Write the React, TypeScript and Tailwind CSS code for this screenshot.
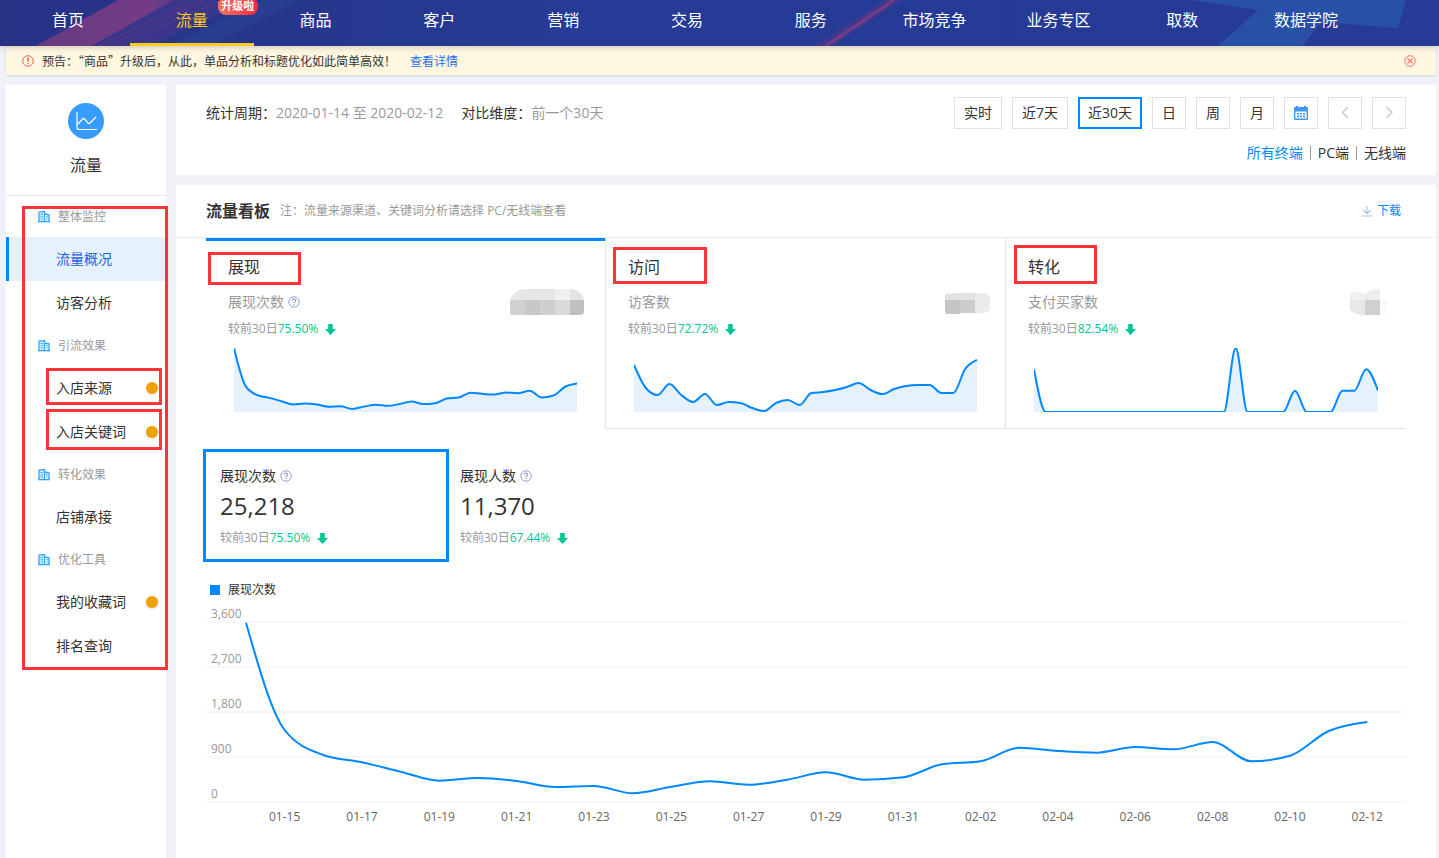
import type { ReactNode } from 'react'

const navItems = ['首页', '流量', '商品', '客户', '营销', '交易', '服务', '市场竞争', '业务专区', '取数', '数据学院']

const menu = [
  { group: '整体监控', items: [{ name: '流量概况', active: true }, { name: '访客分析' }] },
  { group: '引流效果', items: [{ name: '入店来源', dot: true }, { name: '入店关键词', dot: true }] },
  { group: '转化效果', items: [{ name: '店铺承接' }] },
  { group: '优化工具', items: [{ name: '我的收藏词', dot: true }, { name: '排名查询' }] },
] as { group: string; items: { name: string; active?: boolean; dot?: boolean }[] }[]

const exposure = [
  3586, 1440, 940, 794, 606, 426, 480, 420, 300, 320, 174, 306, 414, 346, 446, 594, 446, 494, 754, 814, 1086, 1020,
  986, 1100, 1054, 1200, 814, 926, 1420, 1600,
]
const visitors = [
  47, 24, 17, 28, 17, 10, 18, 7, 10, 9, 4, 1, 9, 12, 7, 19, 20, 22, 25, 29, 22, 18, 23, 26, 27, 27, 19, 19, 43, 52,
]
const buyers = [2, 0, 0, 0, 0, 0, 0, 0, 0, 0, 0, 0, 0, 0, 0, 0, 0, 3, 0, 0, 0, 0, 1, 0, 0, 0, 1, 1, 2, 1]

const tabs = [
  { title: '展现', label: '展现次数', help: true, change: '75.50%', data: exposure, max: 3600, active: true },
  { title: '访问', label: '访客数', help: false, change: '72.72%', data: visitors, max: 64, active: false },
  { title: '转化', label: '支付买家数', help: false, change: '82.54%', data: buyers, max: 3, active: false },
]

// highlight frame and tab borders, one entry per tab
const marks = ['left-[2px] top-[14px] w-[93px] h-[33px]', 'left-[7px] top-[9px] w-[94px] h-[37px]', 'left-[8px] top-[7px] w-[83px] h-[39px]']
const tabBorders = ['border-r border-b border-b-white', 'border-r border-b', 'border-b']

const metrics = [
  { label: '展现次数', value: '25,218', change: '75.50%', active: true },
  { label: '展现人数', value: '11,370', change: '67.44%', active: false },
]

const yLabels = ['3,600', '2,700', '1,800', '900', '0']
const xLabels = [
  '01-15', '01-17', '01-19', '01-21', '01-23', '01-25', '01-27', '01-29', '01-31', '02-02', '02-04', '02-06', '02-08',
  '02-10', '02-12',
]

// monotone cubic through one point per x unit
function spline(values: number[], max: number, height: number) {
  const ys = values.map((v) => height - (v / max) * height)
  const last = ys.length - 1
  const steps = ys.slice(1).map((y, i) => y - ys[i])
  const slopes = ys.map((_, i) => {
    if (i === 0 || i === last) return 0
    const a = steps[i - 1]
    const b = steps[i]
    return (Math.sign(a) + Math.sign(b)) * Math.min(Math.abs(a), Math.abs(b), Math.abs(a + b) / 4)
  })
  slopes[0] = (3 * steps[0] - slopes[1]) / 2
  slopes[last] = (3 * steps[last - 1] - slopes[last - 1]) / 2

  let d = `M0 ${ys[0]}`
  for (let i = 1; i <= last; i++) {
    d += `C${i - 2 / 3} ${ys[i - 1] + slopes[i - 1] / 3} ${i - 1 / 3} ${ys[i] - slopes[i] / 3} ${i} ${ys[i]}`
  }
  return d
}

function MiniChart({ data, max }: { data: number[]; max: number }) {
  const line = spline(data, max, 64)
  return (
    <svg className="block w-full h-16" viewBox="0 0 29 64" preserveAspectRatio="none">
      <path d={`${line}L29 64L0 64Z`} fill="#e5f2fe" />
      <path d={line} fill="none" stroke="#0088ff" strokeWidth="2" vectorEffect="non-scaling-stroke" />
    </svg>
  )
}

function BuildingIcon() {
  return (
    <svg className="w-3 h-3" viewBox="0 0 12 12" fill="none" stroke="#35a5fb">
      <path d="M1 10.5V1L6.5.6v9.9" fill="#d9efff" strokeWidth="1.3" />
      <path d="M6.5 3L11 3.8v6.7" fill="#d9efff" strokeWidth="1.3" />
      <path d="M0 10.6h12" strokeWidth="1.4" />
      <path d="M2.6 3.5h2.3M2.6 5.7h2.3M2.6 7.9h2.3M8 5.7h1.6M8 7.9h1.6" />
    </svg>
  )
}

function HelpIcon() {
  return (
    <svg className="w-3 h-3" viewBox="0 0 12 12" fill="none" stroke="#8ea3d6">
      <circle cx="6" cy="6" r="5.2" />
      <path d="M4.3 4.8C4.3 2.7 7.7 2.7 7.7 4.7C7.7 5.8 6 5.8 6 7.2" strokeWidth="1.2" />
      <path d="M6 8.1v1.2" strokeWidth="1.2" />
    </svg>
  )
}

function DownArrow() {
  return (
    <svg className="w-[11px] h-[11px]" viewBox="0 0 11 11" fill="#00c596">
      <path d="M3.2 0h4.6v5H11L5.5 11L0 5h3.2z" />
    </svg>
  )
}

function CalendarIcon() {
  return (
    <svg className="w-[14px] h-[14px]" viewBox="0 0 14 14">
      <path d="M2 1V0h2v1h6V0h2v1h1q1 0 1 1v3H0V2q0-1 1-1z" fill="#3d97f7" />
      <rect x=".7" y="4.7" width="12.6" height="8.6" rx=".8" fill="#fff" stroke="#3d97f7" strokeWidth="1.4" />
      <path d="M3 7.8h2M6 7.8h2M9 7.8h2M3 10.4h2M6 10.4h2M9 10.4h2" stroke="#3d97f7" strokeWidth="1.6" />
    </svg>
  )
}

function Mosaic({ index }: { index: number }) {
  return (
    <svg className="w-20 h-[26px]" viewBox="0 0 80 26">
      {index === 0 && (
        <>
          <clipPath id="mosaic-a">
            <path d="M0 26V11Q4 1 14 0H60Q72 1 74 11V22Q74 26 70 26Z" />
          </clipPath>
          <g clipPath="url(#mosaic-a)">
            <path d="M0 0h45v11H0z" fill="#e6e6e6" />
            <path d="M45 0h15v11H45z" fill="#efefef" />
            <path d="M60 0h14v11H60z" fill="#e4e4e4" />
            <path d="M0 11h15v15H0z" fill="#d1d1d1" />
            <path d="M15 11h15v15H15z" fill="#c8c8c8" />
            <path d="M30 11h15v15H30z" fill="#cecece" />
            <path d="M45 11h15v15H45z" fill="#dadada" />
            <path d="M60 11h14v15H60z" fill="#c0c0c0" />
          </g>
        </>
      )}
      {index === 1 && (
        <>
          <path d="M35 5L48 4H65V11H35z" fill="#e2e2e2" />
          <path d="M65 4h9q6 1 6 6v9q0 4-6 5h-9z" fill="#ebebeb" />
          <path d="M35 11h15v14H37q-2 0-2-2z" fill="#c5c5c5" />
          <path d="M50 11h15v13H50z" fill="#cccccc" />
        </>
      )}
      {index === 2 && (
        <>
          <path d="M39 11V5Q45-1 54 5V11z" fill="#f1f1f1" />
          <path d="M54 11V5Q59 0 69 0V11z" fill="#ededed" />
          <path d="M39 11h15v15q-11 0-15-5z" fill="#e8e8e8" />
          <path d="M54 11h15v15H54z" fill="#d0d0d0" />
          <path d="M69 11h7v13l-7 2z" fill="#f9f9f9" />
        </>
      )}
    </svg>
  )
}

function Compare({ change }: { change: string }) {
  return (
    <span className="flex items-center text-xs leading-5 text-[#999]">
      较前30日<span className="text-[#00c596] mr-[7px]">{change}</span>
      <DownArrow />
    </span>
  )
}

function RangeButton({ children, active, label }: { children: ReactNode; active?: boolean; label?: string }) {
  return (
    <button
      aria-label={label}
      className={`h-8 min-w-[34px] flex items-center justify-center bg-white ${
        active ? 'border-2 border-[#0088ff] px-2' : 'border border-[#dfe0e3] px-[9px]'
      }`}
    >
      {children}
    </button>
  )
}

function Header() {
  return (
    <header className="relative bg-[#263a94] shadow-md z-10">
      <svg className="absolute inset-0 w-full h-full" viewBox="0 0 1439 46" preserveAspectRatio="none">
        <defs>
          <linearGradient id="head" x1="0" x2="1" y1="0" y2="0">
            <stop offset="0" stopColor="#273285" />
            <stop offset=".4" stopColor="#253b95" />
            <stop offset="1" stopColor="#263a96" />
          </linearGradient>
          <linearGradient id="beam" x1="0" x2="1" y1="0" y2="0">
            <stop offset="0" stopColor="#653b83" />
            <stop offset=".8" stopColor="#743b84" />
            <stop offset="1" stopColor="#5d3a86" />
          </linearGradient>
        </defs>
        <path d="M0 0H1439V46H0z" fill="url(#head)" />
        <path d="M36 46L118 0H174L92 46z" fill="url(#beam)" />
        <path d="M92 46L174 0H250L150 46z" fill="#42378c" opacity=".7" />
        <path d="M170 46L262 0H300L210 46z" fill="#2b4598" opacity=".6" />
        <path d="M108 46L205 0M130 40L222 0M98 46L190 3" stroke="#7d3a80" strokeWidth=".8" opacity=".7" />
        <path d="M812 46L886 0H902L832 46z" fill="#55388c" opacity=".5" />
        <path d="M826 46L894 0" stroke="#793b83" strokeWidth="3" />
        <path d="M1190 0H1406L1398 28L1322 22L1302 46H1218L1258 10z" fill="#2950a7" />
      </svg>
      <nav className="relative flex pl-1.5 pr-[71px]">
        {navItems.map((item) => (
          <a
            key={item}
            href="#"
            className={`relative flex-1 h-[46px] border-b-3 text-center text-base leading-10 ${
              item === '流量' ? 'border-[#f9cb20] text-[#f9cb20]' : 'border-transparent text-white'
            }`}
          >
            {item}
            {item === '流量' && (
              <span className="absolute left-[88px] top-0 w-10 h-[15px] rounded-t-sm rounded-b-lg bg-gradient-to-r from-[#ff7060] to-[#f5223f] text-[11px] leading-3 font-bold text-white">
                升级啦
              </span>
            )}
          </a>
        ))}
      </nav>
    </header>
  )
}

function Notice() {
  return (
    <div className="ml-1.5 mr-[3px] h-[29px] pl-4 pr-5 flex items-center bg-[#fff7e0] shadow text-xs text-[#333] font-['Noto_Sans_CJK_SC',sans-serif]">
      <svg className="w-3 h-3 mr-2" viewBox="0 0 12 12" fill="none" stroke="#f4685c">
        <circle cx="6" cy="6" r="5.3" />
        <path d="M6 2.6v4.2M6 7.9v1.4" strokeWidth="1.6" />
      </svg>
      <p>预告：“商品”升级后，从此，单品分析和标题优化如此简单高效！</p>
      <a href="#" className="ml-3.5 text-[#2a6df0]">
        查看详情
      </a>
      <button aria-label="关闭" className="ml-auto">
        <svg className="w-3 h-3" viewBox="0 0 12 12" fill="none" stroke="#f5796c">
          <circle cx="6" cy="6" r="5.3" />
          <path d="M3.5 3.5L8.5 8.5M8.5 3.5L3.5 8.5" strokeWidth="1.2" />
        </svg>
      </button>
    </div>
  )
}

function Sidebar() {
  return (
    <aside className="w-40 shrink-0 bg-white">
      <div className="h-[111px] pt-[18px] flex flex-col items-center border-b border-[#ebebed]">
        <svg className="w-9 h-9" viewBox="0 0 36 36" fill="none" stroke="#fff">
          <circle cx="18" cy="18" r="18" fill="#389bff" stroke="none" />
          <path d="M9 9v15.5q0 2 2 2h18" strokeWidth="1.2" />
          <path d="M9.5 21.5l5-5.5q1-1 2 0l3.5 4q1 1 2 0l6-6" strokeWidth="1.2" />
        </svg>
        <span className="mt-3.5 text-base leading-6 text-[#333]">流量</span>
      </div>
      <nav className="relative">
        {menu.map(({ group, items }) => (
          <div key={group}>
            <h3 className="h-[41px] pl-8 flex items-center gap-2 text-xs text-[#999]">
              <BuildingIcon />
              {group}
            </h3>
            {items.map((item) => (
              <a
                key={item.name}
                href="#"
                className={`h-11 pl-[47px] pr-2 flex items-center justify-between border-l-3 text-sm ${
                  item.active ? 'border-[#0088ff] bg-[#e5f2fe] text-[#2162e8]' : 'border-transparent text-[#333]'
                }`}
              >
                {item.name}
                {item.dot && <span className="w-3 h-3 rounded-full bg-[#f2a007] shadow" />}
              </a>
            ))}
          </div>
        ))}
        <div className="absolute left-4 top-2.5 w-[146px] h-[464px] border-3 border-[#fa3538] pointer-events-none" />
        <div className="absolute left-10 top-[172px] w-[116px] h-[37px] border-3 border-[#fa3538] pointer-events-none" />
        <div className="absolute left-10 top-[213px] w-[116px] h-[41px] border-3 border-[#fa3538] pointer-events-none" />
      </nav>
    </aside>
  )
}

function FilterBar() {
  return (
    <section className="bg-white px-[30px] py-3 flex justify-between text-sm text-[#333]">
      <div className="flex h-8 items-center gap-[18px]">
        <p>
          统计周期：<span className="text-[#999]">2020-01-14 至 2020-02-12</span>
        </p>
        <p>
          对比维度：<span className="text-[#999]">前一个30天</span>
        </p>
      </div>
      <div className="flex flex-col items-end gap-3.5">
        <div className="flex gap-2.5">
          <RangeButton>实时</RangeButton>
          <RangeButton>近7天</RangeButton>
          <RangeButton active>近30天</RangeButton>
          <RangeButton>日</RangeButton>
          <RangeButton>周</RangeButton>
          <RangeButton>月</RangeButton>
          <RangeButton label="选择日期">
            <CalendarIcon />
          </RangeButton>
          <RangeButton label="上一页">
            <svg className="w-3 h-3" viewBox="0 0 12 12" fill="none" stroke="#c8c8c8" strokeWidth="1.4">
              <path d="M9 0L3.5 5.5L9 11" />
            </svg>
          </RangeButton>
          <RangeButton label="下一页">
            <svg className="w-3 h-3" viewBox="0 0 12 12" fill="none" stroke="#c8c8c8" strokeWidth="1.4">
              <path d="M3.5 0L9 5.5L3.5 11" />
            </svg>
          </RangeButton>
        </div>
        <div className="flex items-center gap-[7px] leading-5">
          <button className="text-[#0088ff]">所有终端</button>
          <span className="w-px h-3.5 bg-[#999]" />
          <button>PC端</button>
          <span className="w-px h-3.5 bg-[#999]" />
          <button>无线端</button>
        </div>
      </div>
    </section>
  )
}

function TrendChart() {
  return (
    <div>
      <div className="mt-[21px] pl-1 flex items-center gap-2 text-xs leading-5 text-[#333]">
        <span className="w-2.5 h-2.5 bg-[#0088ff]" />
        展现次数
      </div>
      <div className="relative mt-[3px]">
        {yLabels.map((label, i) => (
          <div
            key={label}
            className={`pl-[5px] flex items-end border-b-2 border-[#f6f7fb] text-xs leading-[14px] text-[#999] ${
              i === 0 ? 'h-5' : 'h-[45px]'
            }`}
          >
            {label}
          </div>
        ))}
        <div className="absolute left-10 right-0 bottom-0 h-[181px]">
          <svg className="w-full h-[180px] overflow-visible" viewBox="0 0 30 180" preserveAspectRatio="none">
            <path
              d={spline(exposure, 3600, 180)}
              fill="none"
              stroke="#0088ff"
              strokeWidth="2"
              vectorEffect="non-scaling-stroke"
            />
          </svg>
        </div>
      </div>
      <div className="mt-[5px] pl-10 flex text-xs leading-[18px] text-[#666]">
        {xLabels.map((label) => (
          <span key={label} className="flex-1 text-center">
            {label}
          </span>
        ))}
      </div>
    </div>
  )
}

function Board() {
  return (
    <section className="flex-1 bg-white pb-8">
      <div className="h-[53px] pl-[30px] pr-[35px] flex items-center justify-between border-b border-[#ebebed]">
        <div className="flex items-center gap-2.5">
          <h2 className="text-base leading-6 font-bold text-[#333]">流量看板</h2>
          <p className="text-xs text-[#999]">注：流量来源渠道、关键词分析请选择 PC/无线端查看</p>
        </div>
        <a href="#" className="flex items-center gap-1 text-xs text-[#0088ff]">
          <svg className="w-3 h-3" viewBox="0 0 12 12" fill="none" stroke="#a9c4dd" strokeWidth="1.2">
            <path d="M6 1v7.5M2 5l4 3.7L10 5M.5 11h11" />
          </svg>
          下载
        </a>
      </div>
      <div className="px-[30px]">
        <div className="grid grid-cols-3" role="tablist">
          {tabs.map((tab, i) => (
            <button
              key={tab.title}
              role="tab"
              aria-selected={tab.active}
              className={`relative h-[191px] block text-left border-[#e2e3e6] ${tabBorders[i]}`}
            >
              {tab.active && <span className="absolute inset-x-0 top-0 h-[3px] bg-[#0088ff]" />}
              <span className="block pt-[17px] px-[22px] text-base leading-6 text-[#333]">{tab.title}</span>
              <span className="mt-2.5 pl-[22px] pr-[15px] flex items-center justify-between text-sm text-[#999]">
                <span className="flex items-center gap-1">
                  {tab.label}
                  {tab.help && <HelpIcon />}
                </span>
                <Mosaic index={i} />
              </span>
              <span className="block mt-1 px-[22px]">
                <Compare change={tab.change} />
              </span>
              <span className="block mt-[9px] px-7 pb-4">
                <MiniChart data={tab.data} max={tab.max} />
              </span>
              <span className={`absolute border-3 border-[#fa3538] ${marks[i]}`} />
            </button>
          ))}
        </div>
        <div className="mt-[23px] flex">
          {metrics.map((metric) => (
            <button
              key={metric.label}
              className={`w-60 pt-3.5 pb-[11px] px-3.5 text-left ${metric.active ? 'ring-3 ring-[#0088ff]' : ''}`}
            >
              <span className="flex items-center gap-1 text-sm leading-5 text-[#333]">
                {metric.label}
                <HelpIcon />
              </span>
              <span className="block mt-[5px] text-2xl leading-[30px] text-[#333]">{metric.value}</span>
              <span className="block mt-[7px]">
                <Compare change={metric.change} />
              </span>
            </button>
          ))}
        </div>
        <TrendChart />
      </div>
    </section>
  )
}

export default function App() {
  return (
    <div
      lang="zh-CN"
      className="min-h-screen flex flex-col bg-[#f0f2f8] font-['Open_Sans','Noto_Sans_CJK_SC',sans-serif]"
    >
      <Header />
      <Notice />
      <div className="flex-1 mt-2.5 ml-1.5 mr-[3px] flex gap-2.5">
        <Sidebar />
        <main className="flex-1 min-w-0 flex flex-col gap-2.5">
          <FilterBar />
          <Board />
        </main>
      </div>
    </div>
  )
}
